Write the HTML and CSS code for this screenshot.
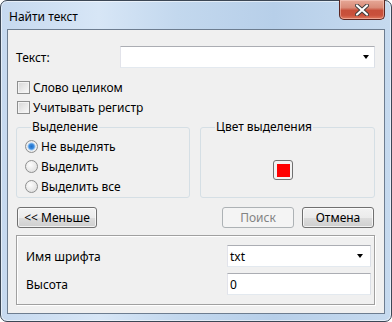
FILE: index.html
```html
<!DOCTYPE html>
<html lang="ru">
<head>
  <meta charset="UTF-8">
  <title>Найти текст</title>
  <link rel="stylesheet" href="styles.css">
</head>
<body>
  <div class="window">
    <div class="titlebar">
      <span class="title">Найти текст</span>
      <button class="close" aria-label="Закрыть">
        <svg width="14" height="12" viewBox="0 0 14 12">
          <path d="M2 1.5 L12 10.5 M12 1.5 L2 10.5" stroke="#3b3b3b" stroke-width="4" stroke-linecap="round"/>
          <path d="M2 1.5 L12 10.5 M12 1.5 L2 10.5" stroke="#fff" stroke-width="2.2" stroke-linecap="round"/>
        </svg>
      </button>
    </div>

    <div class="client">
      <div class="text-row">
        <span class="label">Текст:</span>
        <div class="combo wide"><span class="value"></span><i class="arrow"></i></div>
      </div>

      <label class="check"><span class="box"></span>Слово целиком</label>
      <label class="check"><span class="box"></span>Учитывать регистр</label>

      <div class="groups">
        <fieldset class="group">
          <legend>Выделение</legend>
          <label class="radio checked"><span class="dot"></span>Не выделять</label>
          <label class="radio"><span class="dot"></span>Выделить</label>
          <label class="radio"><span class="dot"></span>Выделить все</label>
        </fieldset>
        <fieldset class="group color">
          <legend>Цвет выделения</legend>
          <button class="swatch"><span></span></button>
        </fieldset>
      </div>

      <div class="buttons">
        <button class="btn less">&lt;&lt; Меньше</button>
        <span class="spacer"></span>
        <button class="btn" disabled>Поиск</button>
        <button class="btn">Отмена</button>
      </div>

      <div class="panel">
        <div class="row">
          <span class="label">Имя шрифта</span>
          <div class="combo"><span class="value">txt</span><i class="arrow"></i></div>
        </div>
        <div class="row">
          <span class="label">Высота</span>
          <div class="input">0</div>
        </div>
      </div>
    </div>
  </div>
</body>
</html>
```

FILE: styles.css
```css
* {
  box-sizing: border-box;
}
body {
  margin: 0;
  width: 392px;
  height: 322px;
  font-family: 'Noto Sans', 'DejaVu Sans', sans-serif;
  font-size: 12px;
  color: #000;
  background: #fff;
}
.window {
  width: 392px;
  height: 322px;
  display: flex;
  flex-direction: column;
  padding: 0 6px 7px 6px;
  border: 1px solid #3c4755;
  border-radius: 7px;
  background: linear-gradient(to right, #c6d9ef 0%, #d7e6f6 25%, #c3d8ee 45%, #b7cfe9 70%, #c6daef 100%);
  box-shadow: inset 0 0 0 1px rgba(255, 255, 255, 0.55);
}
.titlebar {
  position: relative;
  height: 28px;
  display: flex;
  align-items: center;
  padding-left: 2px;
  padding-top: 2px;
}
.title {
  color: #000;
}
.close {
  position: absolute;
  top: -1px;
  right: 0;
  width: 46px;
  height: 20px;
  padding: 0;
  border: 1px solid #5b2621;
  border-top: none;
  border-radius: 0 0 5px 5px;
  background: linear-gradient(#e6a897 0%, #d98b78 40%, #c74f3a 55%, #c9513c 80%, #e07a5f 100%);
  box-shadow: inset 0 0 0 1px rgba(255, 220, 210, 0.45);
  display: flex;
  align-items: center;
  justify-content: center;
}
.client {
  flex: 1;
  display: flex;
  flex-direction: column;
  padding: 16px 9px 0 8px;
  background: #f0f0f0;
  border: 1px solid #6d7d90;
}
.text-row {
  display: flex;
  align-items: center;
  height: 22px;
}
.text-row .label {
  width: 104px;
}
.combo, .input {
  height: 22px;
  display: flex;
  align-items: center;
  padding: 0 2px;
  background: #fff;
  border: 1px solid;
  border-color: #abadb3 #dbdfe6 #e3e9ef #e2e3ea;
}
.combo.wide {
  flex: 1;
}
.combo .value {
  flex: 1;
}
.arrow {
  width: 0;
  height: 0;
  margin-right: 3px;
  border-left: 3.5px solid transparent;
  border-right: 3.5px solid transparent;
  border-top: 4px solid #000;
}
.check {
  display: flex;
  align-items: center;
  height: 20px;
  padding-left: 1px;
  gap: 3px;
}
.check:first-of-type {
  margin-top: 9px;
}
.box {
  width: 13px;
  height: 13px;
  border: 1px solid #8e8f8f;
  background: linear-gradient(135deg, #d6d6d6, #fafafa);
  box-shadow: inset 0 0 0 1px #f3f3f3;
}
.groups {
  display: flex;
  gap: 10px;
  margin-top: 2px;
}
.group {
  margin: 0;
  height: 79px;
  border: 1px solid #d5dfe5;
  border-radius: 3px;
  padding: 1px 0 0 8px;
  min-width: 0;
}
.group legend {
  padding: 0 1px;
  margin-left: 6px;
  line-height: 16px;
}
.group:first-child {
  width: 174px;
}
.group.color {
  flex: 1;
  display: flex;
  align-items: center;
  justify-content: center;
  padding: 0 17px 0 8px;
}
.radio {
  display: flex;
  align-items: center;
  height: 20px;
  gap: 3px;
}
.dot {
  width: 13px;
  height: 13px;
  border-radius: 50%;
  border: 1px solid #8e8f8f;
  background: radial-gradient(circle at 40% 35%, #fdfdfd, #d8d8d8);
}
.radio.checked .dot {
  background: radial-gradient(circle, #1f6fc7 0, #3c8ce0 2.5px, #9cc6ef 3.5px, #f4f4f4 4.5px, #dcdcdc 6px);
}
.swatch {
  width: 20px;
  height: 20px;
  padding: 0;
  margin-top: 8px;
  border: 1px solid #707070;
  border-radius: 3px;
  background: #f2f2f2;
  display: flex;
  align-items: center;
  justify-content: center;
}
.swatch span {
  width: 13px;
  height: 13px;
  background: #ff0000;
}
.buttons {
  display: flex;
  gap: 8px;
  margin-top: 9px;
  padding: 0 1px;
}
.spacer {
  flex: 1;
}
.btn {
  width: 72px;
  height: 21px;
  padding: 0;
  font: inherit;
  color: #000;
  border: 1px solid #707070;
  border-radius: 3px;
  background: linear-gradient(#f2f2f2 0%, #ebebeb 50%, #dddddd 51%, #cfcfcf 100%);
  box-shadow: inset 0 0 0 1px rgba(255, 255, 255, 0.7);
}
.btn.less {
  width: 80px;
}
.btn:disabled {
  color: #838383;
  border-color: #adb2b5;
  background: #f4f4f4;
  box-shadow: none;
}
.panel {
  margin-top: 7px;
  height: 70px;
  display: flex;
  flex-direction: column;
  gap: 6px;
  padding: 9px 3px 0 9px;
  border: 1px solid #a0a0a0;
  box-shadow: inset 1px 1px 0 #fff, 1px 1px 0 #fff;
}
.row {
  display: flex;
  align-items: center;
  justify-content: space-between;
}
.row .combo, .row .input {
  width: 144px;
}
.row .combo .arrow {
  margin-right: 5px;
}
```
